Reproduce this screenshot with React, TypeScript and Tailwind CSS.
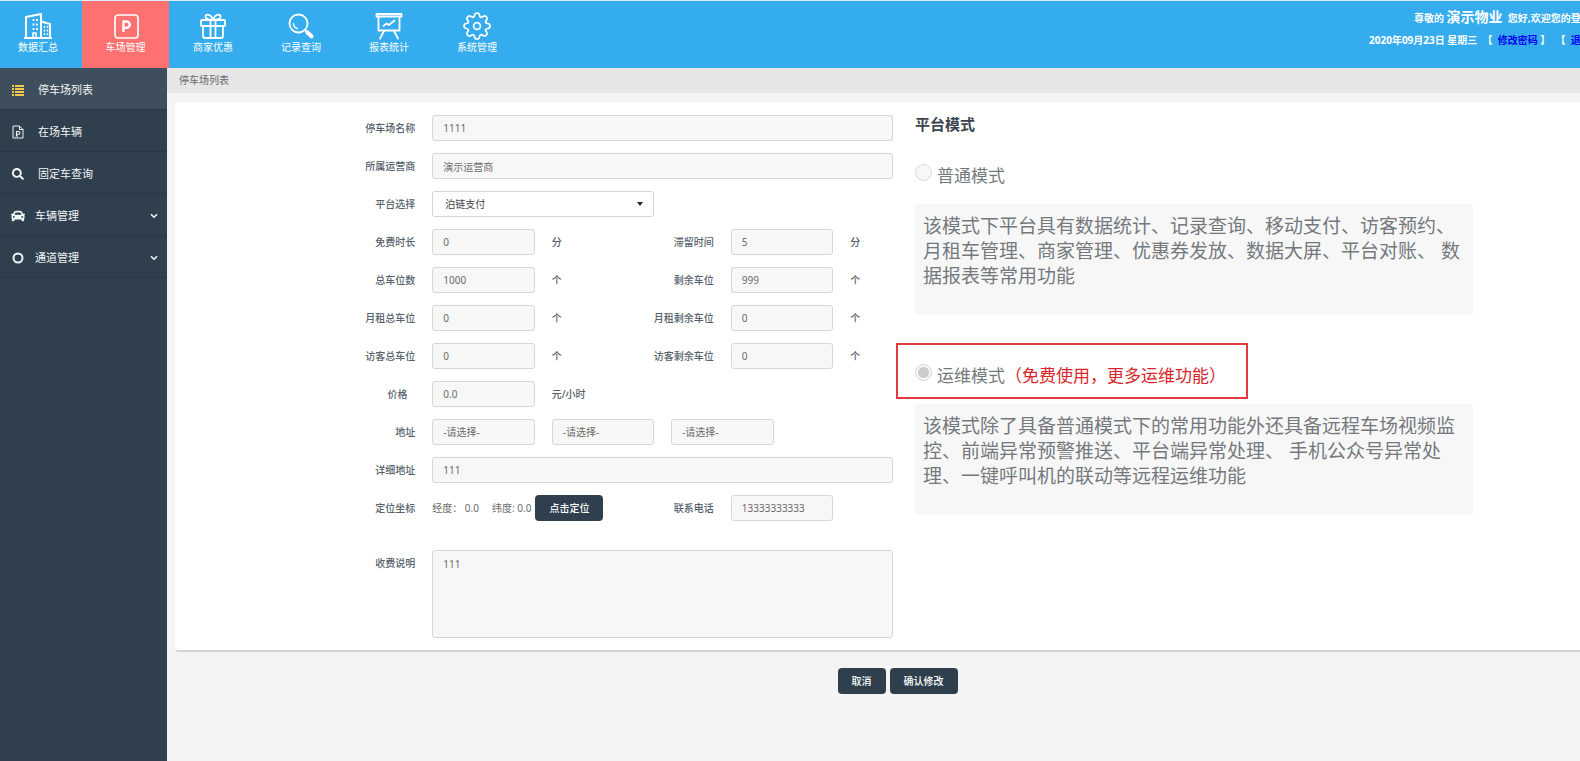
import React from "react";
import { FaCar, FaSearch } from "react-icons/fa";

const strokeProps = {
  fill: "none",
  stroke: "currentColor",
  strokeWidth: 2,
  strokeLinecap: "round" as const,
  strokeLinejoin: "round" as const,
};

function BuildingsIcon() {
  return (
    <svg viewBox="0 0 28 28" className="size-7" aria-hidden="true" {...strokeProps} strokeLinecap="square">
      <path d="M2 26V5L17 2V26M17 9.5 26 12V26M1 26H27" />
      <path d="M9 26V21H12V26" strokeWidth="1.6" />
      <path d="M9.5 7V18M13 7V18" strokeWidth="1.8" strokeLinecap="butt" strokeDasharray="2 2.500" />
      <path d="M20.5 14V24M23.5 14V24" strokeWidth="1.4" strokeLinecap="butt" strokeDasharray="1.8 1.800" />
    </svg>
  );
}

function ParkingIcon() {
  return (
    <svg viewBox="0 0 28 28" className="size-7" aria-hidden="true" {...strokeProps}>
      <rect x="3" y="3" width="23" height="23" rx="3" strokeWidth="1.7" />
      <path d="M11.5 20V9.500H14.500a3.200 3.200 0 0 1 0 6.400H11.5" strokeWidth="2.4" strokeLinecap="butt" strokeLinejoin="miter" />
    </svg>
  );
}

function GiftIcon() {
  return (
    <svg viewBox="0 0 28 28" className="size-7" aria-hidden="true" {...strokeProps} strokeWidth="1.8">
      <rect x="2" y="8" width="24" height="6" rx="1" />
      <path d="M4 14V24a2 2 0 0 0 2 2H22a2 2 0 0 0 2-2V14M11.5 8V26M16.5 8V26" />
      <path d="M14 8C8 8 6 6 6.500 4 7 2 12 1.500 14 8ZM14 8C20 8 22 6 21.500 4 21 2 16 1.500 14 8Z" />
    </svg>
  );
}

function MagnifierIcon() {
  return (
    <svg viewBox="0 0 28 28" className="size-7" aria-hidden="true" {...strokeProps}>
      <circle cx="11.500" cy="11.500" r="9" strokeWidth="1.8" />
      <path d="M6.500 11.500A5.200 5.200 0 0 0 10.500 16.500" strokeWidth="1.3" />
      <path d="M18.200 18.200 20 20" strokeWidth="2" />
      <path d="M20.500 20.500 24.500 24.200" strokeWidth="4.200" />
    </svg>
  );
}

function BoardIcon() {
  return (
    <svg viewBox="0 0 28 28" className="size-7" aria-hidden="true" {...strokeProps} strokeWidth="1.8">
      <path d="M1.500 2H26.500V4.500H1.500ZM3.500 5V18.500H24.500V5" />
      <path d="M8.500 14 11.500 11.500 14 13 19.500 8.500" />
      <path d="M9 19 5 26.500M19 19 23 26.500" />
    </svg>
  );
}

function GearIcon() {
  return (
    <svg viewBox="0 0 28 28" className="size-7" aria-hidden="true" {...strokeProps} strokeWidth="1.7">
      <path d="M11.500 3.500A2.500 2.500 0 0 1 16.500 3.500Q16.800 5.200 18 5.500L20 4.500A2.500 2.500 0 0 1 23.500 8L22.500 10Q22.800 11.200 24.500 11.500A2.500 2.500 0 0 1 24.500 16.500Q22.800 16.800 22.500 18L23.500 20A2.500 2.500 0 0 1 20 23.500L18 22.500Q16.800 22.800 16.500 24.500A2.500 2.500 0 0 1 11.500 24.500Q11.200 22.800 10 22.500L8 23.500A2.500 2.500 0 0 1 4.500 20L5.500 18Q5.200 16.800 3.500 16.500A2.500 2.500 0 0 1 3.500 11.500Q5.200 11.200 5.500 10L4.500 8A2.500 2.500 0 0 1 8 4.500L10 5.500Q11.200 5.200 11.500 3.500Z" />
      <circle cx="14" cy="14" r="3.400" />
    </svg>
  );
}

function ListIcon() {
  return (
    <svg viewBox="0 0 12 11" className="h-[11px] w-3" fill="currentColor" aria-hidden="true">
      <path d="M0 0h2v2H0zM3 0h9v2H3zM0 3h2v2H0zM3 3h9v2H3zM0 6h2v2H0zM3 6h9v2H3zM0 9h2v2H0zM3 9h9v2H3z" />
    </svg>
  );
}

function FileIcon() {
  return (
    <svg viewBox="0 0 12 14" className="h-3.5 w-3" fill="none" stroke="currentColor" aria-hidden="true">
      <path d="M1 1H7.500L11 4.500V13H1ZM7.500 1V4.500H11" />
      <path d="M4.500 11V6.500H6.500a1.400 1.400 0 0 1 0 2.800H4.500M3.500 11H6" strokeWidth="1.100" />
    </svg>
  );
}

function RingIcon() {
  return (
    <svg viewBox="0 0 12 12" className="size-3" fill="none" stroke="currentColor" strokeWidth="2" aria-hidden="true">
      <circle cx="6" cy="6" r="4.500" />
    </svg>
  );
}

function ChevronIcon() {
  return (
    <svg viewBox="0 0 8 6" className="h-1.5 w-2" fill="none" stroke="currentColor" strokeWidth="1.600" aria-hidden="true">
      <path d="M1 1.200 4 4.200 7 1.200" />
    </svg>
  );
}

const modules = [
  { label: "数据汇总", icon: <BuildingsIcon />, className: "w-[82px] pr-1.5" },
  { label: "车场管理", icon: <ParkingIcon />, className: "w-[87px] bg-[#ff7070]" },
  { label: "商家优惠", icon: <GiftIcon />, className: "w-[88px]" },
  { label: "记录查询", icon: <MagnifierIcon />, className: "w-[88px]" },
  { label: "报表统计", icon: <BoardIcon />, className: "w-[88px]" },
  { label: "系统管理", icon: <GearIcon />, className: "w-[88px]" },
];

function TopBar() {
  return (
    <header className="flex h-[68px] justify-between overflow-hidden border-t border-[#d9eef9] bg-[#35acee] text-white">
      <nav className="flex">
        {modules.map((m) => (
          <a key={m.label} href="#" className={`flex flex-col items-center pt-[11px] ${m.className}`}>
            {m.icon}
            <span className="text-[10px] leading-[14px]">{m.label}</span>
          </a>
        ))}
      </nav>
      <div className="w-[211px] overflow-hidden whitespace-nowrap pt-1.5 text-[10px] font-bold">
        <p className="pl-[45px] leading-5">
          尊敬的 <span className="text-sm leading-5">演示物业</span>&nbsp; 您好,欢迎您的登录
        </p>
        <p className="pt-1 leading-4">
          2020年09月23日 星期三&nbsp; 【&nbsp; <a href="#" className="text-[#0000ee]">修改密码</a> 】&nbsp; 【&nbsp; <a href="#" className="text-[#0000ee]">退出</a> 】
        </p>
      </div>
    </header>
  );
}

const menu = [
  { label: "停车场列表", icon: <ListIcon />, active: true, nested: false },
  { label: "在场车辆", icon: <FileIcon />, active: false, nested: false },
  { label: "固定车查询", icon: <FaSearch className="size-3" />, active: false, nested: false },
  { label: "车辆管理", icon: <FaCar className="size-3.5" />, active: false, nested: true },
  { label: "通道管理", icon: <RingIcon />, active: false, nested: true },
];

function Sidebar() {
  return (
    <aside className="w-[167px] shrink-0 bg-[#2f3f4d] text-[#f2f5f8]">
      <ul>
        {menu.map((item) => (
          <li key={item.label} className="border-b border-[#2a3845]">
            <a
              href="#"
              className={`flex h-[41px] items-center pl-[11px] pr-[9px] pt-[3px] text-[11px] ${item.active ? "bg-[#3e4e5c]" : ""}`}
            >
              <span className={`flex w-3.5 justify-center ${item.active ? "text-[#f0c94a]" : ""}`}>{item.icon}</span>
              <span className={`flex-1 ${item.nested ? "pl-2.5" : "pl-[13px]"}`}>{item.label}</span>
              {item.nested && <ChevronIcon />}
            </a>
          </li>
        ))}
      </ul>
    </aside>
  );
}

const control =
  "block w-full rounded-[3px] border border-[#d6d6d6] bg-[#f7f7f7] px-2.5 text-[10px] text-[#6a6a6a] opacity-100";

function Row({ children }: { children: React.ReactNode }) {
  return (
    <div className="grid min-h-[26px] grid-cols-[35%_repeat(8,minmax(0,1fr))] items-center">{children}</div>
  );
}

function Label({ id, children, wide = false }: { id: string; children: React.ReactNode; wide?: boolean }) {
  return (
    <label
      htmlFor={id}
      className={`whitespace-nowrap pr-[17px] text-right font-medium text-[#56616c] ${wide ? "col-span-2" : ""}`}
    >
      {children}
    </label>
  );
}

function TextInput({ id, value }: { id: string; value: string }) {
  return <input id={id} type="text" disabled defaultValue={value} className={`h-[26px] ${control}`} />;
}

function Unit({ children }: { children: React.ReactNode }) {
  return <span className="whitespace-nowrap font-medium text-[#56616c]">{children}</span>;
}

const pairs = [
  { id: "free", label: "免费时长", value: "0", unit: "分", id2: "stay", label2: "滞留时间", value2: "5" },
  { id: "total", label: "总车位数", value: "1000", unit: "个", id2: "left", label2: "剩余车位", value2: "999" },
  { id: "month", label: "月租总车位", value: "0", unit: "个", id2: "monthLeft", label2: "月租剩余车位", value2: "0" },
  { id: "guest", label: "访客总车位", value: "0", unit: "个", id2: "guestLeft", label2: "访客剩余车位", value2: "0" },
];

const darkButton = "h-[26px] rounded-[4px] bg-[#2f3f4d] px-3.5 text-[10px] font-medium text-white";

function ParkingForm() {
  return (
    <form className="flex flex-col gap-3 pt-[13px] text-[10px] leading-4">
      <Row>
        <Label id="name">停车场名称</Label>
        <div className="col-span-8 pr-[17px]">
          <TextInput id="name" value="1111" />
        </div>
      </Row>
      <Row>
        <Label id="operator">所属运营商</Label>
        <div className="col-span-8 pr-[17px]">
          <TextInput id="operator" value="演示运营商" />
        </div>
      </Row>
      <Row>
        <Label id="platform">平台选择</Label>
        <div className="relative col-span-4 pr-[17px]">
          <select
            id="platform"
            className="block h-[26px] w-full appearance-none rounded-[3px] border border-[#d6d6d6] bg-white px-3 text-[10px] text-[#444]"
          >
            <option>泊链支付</option>
          </select>
          <svg viewBox="0 0 6 4" className="pointer-events-none absolute right-7 top-[11px] h-1 w-1.5" fill="#222" aria-hidden="true">
            <path d="M0 0h6L3 4z" />
          </svg>
        </div>
      </Row>
      {pairs.map((p) => (
        <Row key={p.id}>
          <Label id={p.id}>{p.label}</Label>
          <div className="col-span-2 pr-[17px]">
            <TextInput id={p.id} value={p.value} />
          </div>
          <Unit>{p.unit}</Unit>
          <Label id={p.id2} wide>{p.label2}</Label>
          <div className="col-span-2 pr-[17px]">
            <TextInput id={p.id2} value={p.value2} />
          </div>
          <Unit>{p.unit}</Unit>
        </Row>
      ))}
      <Row>
        <Label id="price">价格{"\u00a0\u00a0\u00a0"}</Label>
        <div className="col-span-2 pr-[17px]">
          <TextInput id="price" value="0.0" />
        </div>
        <Unit>元/小时</Unit>
      </Row>
      <Row>
        <Label id="province">地址</Label>
        {["province", "city", "district"].map((id) => (
          <div key={id} className="col-span-2 pr-[17px]">
            <select id={id} aria-label={id === "province" ? undefined : "地址"} disabled className={`h-[26px] appearance-none ${control}`}>
              <option>-请选择-</option>
            </select>
          </div>
        ))}
      </Row>
      <Row>
        <Label id="address">详细地址</Label>
        <div className="col-span-8 pr-[17px]">
          <TextInput id="address" value="111" />
        </div>
      </Row>
      <Row>
        <Label id="locate">定位坐标</Label>
        <div className="col-span-3 flex items-center whitespace-nowrap text-[#6a6a6a]">
          <span>经度： 0.0</span>
          <span className="pl-[13px]">纬度: 0.0</span>
          <button id="locate" type="button" className={`ml-1 ${darkButton}`}>点击定位</button>
        </div>
        <Label id="phone" wide>联系电话</Label>
        <div className="col-span-2 pr-[17px]">
          <TextInput id="phone" value="13333333333" />
        </div>
      </Row>
      <div className="grid grid-cols-[35%_minmax(0,1fr)] pt-[17px]">
        <div className="pt-[5px] text-right">
          <Label id="note">收费说明</Label>
        </div>
        <div className="pr-[17px]">
          <textarea id="note" disabled defaultValue="111" className={`h-[88px] resize-none py-[5px] leading-4 ${control}`} />
        </div>
      </div>
    </form>
  );
}

const radio =
  "size-[17px] shrink-0 appearance-none rounded-full border border-[#d6d6d6] bg-[#f7f7f7] bg-clip-padding checked:bg-[radial-gradient(circle,#cccccc_0_5px,#f7f7f7_6px)]";
const description = "w-[558px] max-w-full bg-[#f7f7f7] px-2 pt-2.5 text-[19px] leading-[25px] h-[110px] text-[#75797e]";

function ModePanel() {
  return (
    <section className="pl-[5px] pr-4 pt-3 text-[#75797e]">
      <h2 className="text-[15px] font-bold leading-5 text-[#3b444d]">平台模式</h2>
      <div className="flex gap-[5px] pt-[30px] text-[17px] leading-6">
        <input id="normal" type="radio" name="mode" disabled className={radio} />
        <label htmlFor="normal">普通模式</label>
      </div>
      <p className={`mt-4 ${description}`}>
        该模式下平台具有数据统计、记录查询、移动支付、访客预约、月租车管理、商家管理、优惠券发放、数据大屏、平台对账、 数据报表等常用功能
      </p>
      <div className="relative mt-[50px] flex gap-[5px] text-[17px] leading-6">
        <input id="ops" type="radio" name="mode" disabled defaultChecked className={radio} />
        <label htmlFor="ops">
          运维模式<span className="text-[#d8262c]">（免费使用，更多运维功能）</span>
        </label>
        <div className="pointer-events-none absolute -left-[19px] -top-[21px] h-14 w-[352px] border-2 border-[#e0393e]" />
      </div>
      <p className={`mt-4 ${description}`}>
        该模式除了具备普通模式下的常用功能外还具备远程车场视频监控、前端异常预警推送、平台端异常处理、 手机公众号异常处理、一键呼叫机的联动等远程运维功能
      </p>
    </section>
  );
}

export default function App() {
  return (
    <div className="flex min-h-screen flex-col overflow-hidden bg-[#f4f4f4] font-['Noto_Sans','Noto_Sans_CJK_SC',sans-serif]">
      <TopBar />
      <div className="flex flex-1">
        <Sidebar />
        <main className="min-w-0 flex-1">
          <div className="h-[25px] bg-[#e6e6e6] pl-3 text-[10px] leading-6 text-[#6a6a6a]">停车场列表</div>
          <div className="pl-2 pt-[9px]">
            <div className="grid grid-cols-[735fr_670fr] rounded-l-[4px] border-b-2 border-[#d4d4d4] bg-white pb-3">
              <ParkingForm />
              <ModePanel />
            </div>
          </div>
          <div className="flex justify-center gap-1 pl-12 pt-4">
            <button type="button" className={darkButton}>取消</button>
            <button type="button" className={darkButton}>确认修改</button>
          </div>
        </main>
      </div>
    </div>
  );
}
